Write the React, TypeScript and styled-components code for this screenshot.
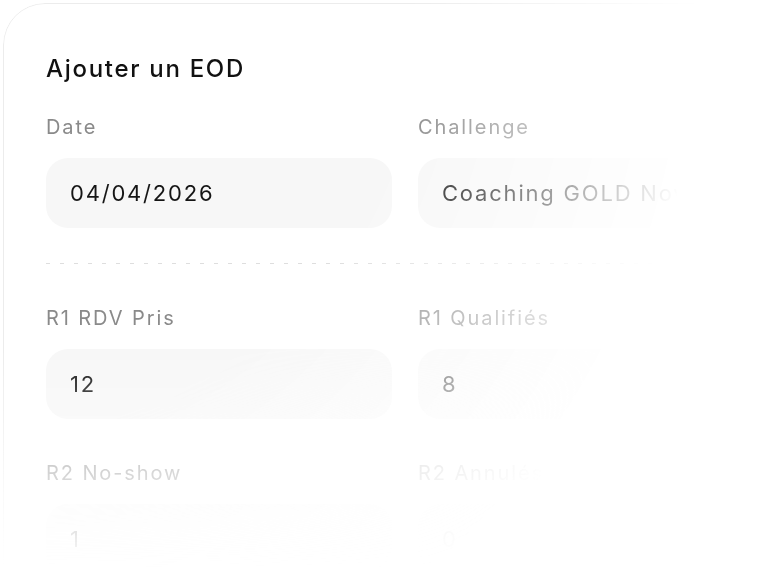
import React from "react";
import styled, { createGlobalStyle } from "styled-components";

const Global = createGlobalStyle`
  html, body { margin: 0; padding: 0; background: #ffffff; }
  body { overflow: hidden; width: 760px; height: 567px; font-family: Inter, "Noto Sans", Arial, sans-serif; }
`;

const Page = styled.div`
  padding: 3px 0 0 3px;
  width: 760px;
  height: 567px;
  box-sizing: border-box;
  overflow: hidden;
  -webkit-mask-image: linear-gradient(to bottom, #000 347px, transparent 569px);
  mask-image: linear-gradient(to bottom, #000 347px, transparent 569px);
`;

const Card = styled.section`
  width: 860px;
  height: 700px;
  box-sizing: border-box;
  background: #ffffff;
  border: 1px solid #ececec;
  border-radius: 42px;
  padding: 49px 0 0 42px;
  -webkit-mask-image: radial-gradient(702px 750px at -3px -3px, #000 58%, transparent 100%);
  mask-image: radial-gradient(702px 750px at -3px -3px, #000 58%, transparent 100%);
`;

const Title = styled.h2`
  margin: 0;
  font-size: 24px;
  line-height: 32px;
  font-weight: 500;
  color: #111111;
  letter-spacing: 1.7px;
`;

const Grid = styled.div<{ $top: number }>`
  display: grid;
  grid-template-columns: 346px 346px;
  column-gap: 26px;
  row-gap: 40px;
  margin-top: ${(p) => p.$top}px;
`;

const Field = styled.div`
  display: flex;
  flex-direction: column;
  gap: 17px;
`;

const Label = styled.label`
  font-size: 20px;
  line-height: 28px;
  color: #8a8a8a;
  letter-spacing: 1.9px;
`;

const Value = styled.div`
  height: 70px;
  box-sizing: border-box;
  border-radius: 22px;
  background: #f7f7f7;
  padding: 0 24px;
  display: flex;
  align-items: center;
  font-size: 22px;
  color: #151515;
  letter-spacing: 1.8px;
  white-space: nowrap;
  overflow: hidden;
`;

const Divider = styled.div`
  height: 1px;
  margin-top: 35px;
  width: 720px;
  background-image: linear-gradient(to right, #dedede 0 4px, transparent 4px 14px);
  background-size: 14px 1px;
  background-repeat: repeat-x;
`;

const fieldsTop = [
  { label: "Date", value: "04/04/2026" },
  { label: "Challenge", value: "Coaching GOLD Nov" },
];

const fieldsBottom = [
  { label: "R1 RDV Pris", value: "12" },
  { label: "R1 Qualifiés", value: "8" },
  { label: "R2 No-show", value: "1" },
  { label: "R2 Annulés", value: "0" },
];

export default function App() {
  return (
    <>
      <Global />
      <Page>
        <Card>
          <Title>Ajouter un EOD</Title>
          <Grid $top={28}>
            {fieldsTop.map((f) => (
              <Field key={f.label}>
                <Label>{f.label}</Label>
                <Value>{f.value}</Value>
              </Field>
            ))}
          </Grid>
          <Divider />
          <Grid $top={40}>
            {fieldsBottom.map((f) => (
              <Field key={f.label}>
                <Label>{f.label}</Label>
                <Value>{f.value}</Value>
              </Field>
            ))}
          </Grid>
        </Card>
      </Page>
    </>
  );
}
